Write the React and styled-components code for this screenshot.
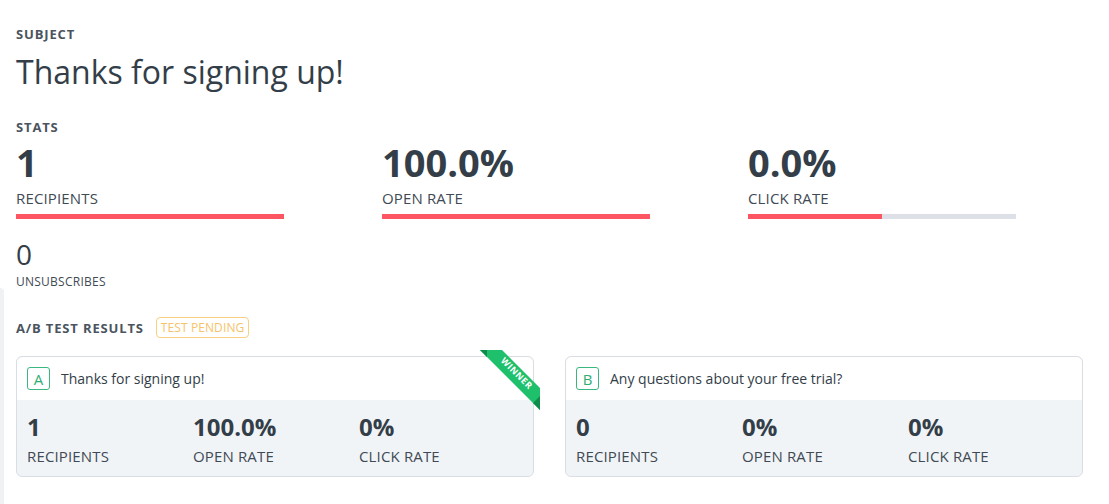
import React from 'react'
import styled, { createGlobalStyle } from 'styled-components'

const GlobalStyle = createGlobalStyle`
    body {
        margin: 0;
        background: #ffffff;
        font-family: "Open Sans", "Liberation Sans", sans-serif;
        color: #333e48;
    }
`;

const Page = styled.div`
    position: relative;
    width: 1067px;
    padding: 26px 0 28px 16px;
`;

const EdgeShade = styled.div`
    position: absolute;
    left: 0;
    top: 288px;
    bottom: 0;
    width: 4px;
    background: #eff1f3;
    border-top-right-radius: 4px;
`;

const SectionLabel = styled.div`
    font-size: 13px;
    line-height: 16px;
    font-weight: 700;
    letter-spacing: 0.85px;
    text-transform: uppercase;
    color: #4a545e;
`;

const Subject = styled.h1`
    margin: 10px 0 27px;
    font-size: 32px;
    line-height: 40px;
    font-weight: 400;
    color: #333e48;
`;

const StatsGrid = styled.div`
    display: grid;
    grid-template-columns: repeat(3, 366px);
    margin-top: 5px;
`;

const Stat = styled.div`
    display: flex;
    flex-direction: column;
`;

const BigNumber = styled.div`
    font-size: 38px;
    line-height: 44px;
    font-weight: 700;
    color: #333e48;
`;

const StatLabel = styled.div`
    margin-top: 4px;
    font-size: 15px;
    line-height: 20px;
    letter-spacing: 0.15px;
    color: #3f4a54;
`;

const Bar = styled.div`
    margin-top: 6px;
    width: 268px;
    height: 5px;
    background: #dde1e7;
`;

const BarFill = styled.div`
    height: 100%;
    background: #fd5562;
`;

const Unsub = styled.div`
    margin-top: 18px;
`;

const UnsubNumber = styled.div`
    font-size: 28px;
    line-height: 34px;
    color: #333e48;
`;

const UnsubLabel = styled.div`
    margin-top: 3px;
    font-size: 12px;
    line-height: 16px;
    letter-spacing: 0.25px;
    color: #3f4a54;
`;

const AbHeader = styled.div`
    margin-top: 27px;
    display: flex;
    align-items: center;
    gap: 12px;
`;

const PendingBadge = styled.span`
    display: inline-flex;
    align-items: center;
    height: 21px;
    box-sizing: border-box;
    padding: 0 4px;
    border: 1px solid #f8cf83;
    border-radius: 4px;
    font-size: 12px;
    letter-spacing: 0.1px;
    color: #f6c36a;
`;

const Cards = styled.div`
    margin-top: 18px;
    display: grid;
    grid-template-columns: 518px 518px;
    gap: 31px;
`;

const Card = styled.div`
    position: relative;
    border: 1px solid #d9dee5;
    border-radius: 6px;
    background: #f1f4f7;
`;

const CardHead = styled.div`
    display: flex;
    align-items: center;
    gap: 11px;
    padding: 10px;
    background: #ffffff;
    border-radius: 6px 6px 0 0;
`;

const VariantBadge = styled.span`
    width: 23px;
    height: 23px;
    box-sizing: border-box;
    display: flex;
    align-items: center;
    justify-content: center;
    border: 1px solid #3ab67f;
    border-radius: 3px;
    color: #2fae72;
    font-size: 15px;
`;

const CardTitle = styled.span`
    font-size: 14px;
    color: #333e48;
`;

const CardBody = styled.div`
    display: grid;
    grid-template-columns: repeat(3, 166px);
    padding: 12px 10px 11px;
`;

const CardNumber = styled.div`
    font-size: 24px;
    line-height: 30px;
    font-weight: 700;
    color: #333e48;
`;

const CardLabel = styled.div`
    margin-top: 5px;
    font-size: 15px;
    line-height: 18px;
    letter-spacing: 0.15px;
    color: #3f4a54;
`;

const RibbonBox = styled.svg`
    position: absolute;
    top: -7px;
    right: -7px;
    overflow: hidden;
`;

const Ribbon = () => (
    <RibbonBox width="60" height="60" viewBox="0 0 60 60">
        <polygon points="0,0 22,0 60,38 60,60" fill="#1fc06c" />
        <polygon points="0,0 7,0 7,7" fill="#0f8c4c" />
        <polygon points="53,53 60,46 60,60" fill="#0f8c4c" />
        <text
            x="0"
            y="0"
            transform="translate(34.5 25.5) rotate(45)"
            textAnchor="middle"
            fill="#ffffff"
            fontSize="9"
            fontWeight="700"
            letterSpacing="0.5"
            fontFamily="Open Sans, sans-serif"
        >WINNER</text>
    </RibbonBox>
);

const stats = [
    { value: '1', label: 'RECIPIENTS', fill: 100 },
    { value: '100.0%', label: 'OPEN RATE', fill: 100 },
    { value: '0.0%', label: 'CLICK RATE', fill: 50 },
];

const variants = [
    { letter: 'A', title: 'Thanks for signing up!', winner: true, values: ['1', '100.0%', '0%'] },
    { letter: 'B', title: 'Any questions about your free trial?', winner: false, values: ['0', '0%', '0%'] },
];

const cardLabels = ['RECIPIENTS', 'OPEN RATE', 'CLICK RATE'];

export default function App() {
    return (
        <>
            <GlobalStyle />
            <Page>
                <EdgeShade />
                <SectionLabel>Subject</SectionLabel>
                <Subject>Thanks for signing up!</Subject>

                <SectionLabel>Stats</SectionLabel>
                <StatsGrid>
                    {stats.map(s => (
                        <Stat key={s.label}>
                            <BigNumber>{s.value}</BigNumber>
                            <StatLabel>{s.label}</StatLabel>
                            <Bar>
                                <BarFill style={{ width: `${s.fill}%` }} />
                            </Bar>
                        </Stat>
                    ))}
                </StatsGrid>

                <Unsub>
                    <UnsubNumber>0</UnsubNumber>
                    <UnsubLabel>UNSUBSCRIBES</UnsubLabel>
                </Unsub>

                <AbHeader>
                    <SectionLabel>A/B Test Results</SectionLabel>
                    <PendingBadge>TEST PENDING</PendingBadge>
                </AbHeader>

                <Cards>
                    {variants.map(v => (
                        <Card key={v.letter}>
                            {v.winner && <Ribbon />}
                            <CardHead>
                                <VariantBadge>{v.letter}</VariantBadge>
                                <CardTitle>{v.title}</CardTitle>
                            </CardHead>
                            <CardBody>
                                {v.values.map((val, i) => (
                                    <div key={cardLabels[i]}>
                                        <CardNumber>{val}</CardNumber>
                                        <CardLabel>{cardLabels[i]}</CardLabel>
                                    </div>
                                ))}
                            </CardBody>
                        </Card>
                    ))}
                </Cards>
            </Page>
        </>
    )
}
